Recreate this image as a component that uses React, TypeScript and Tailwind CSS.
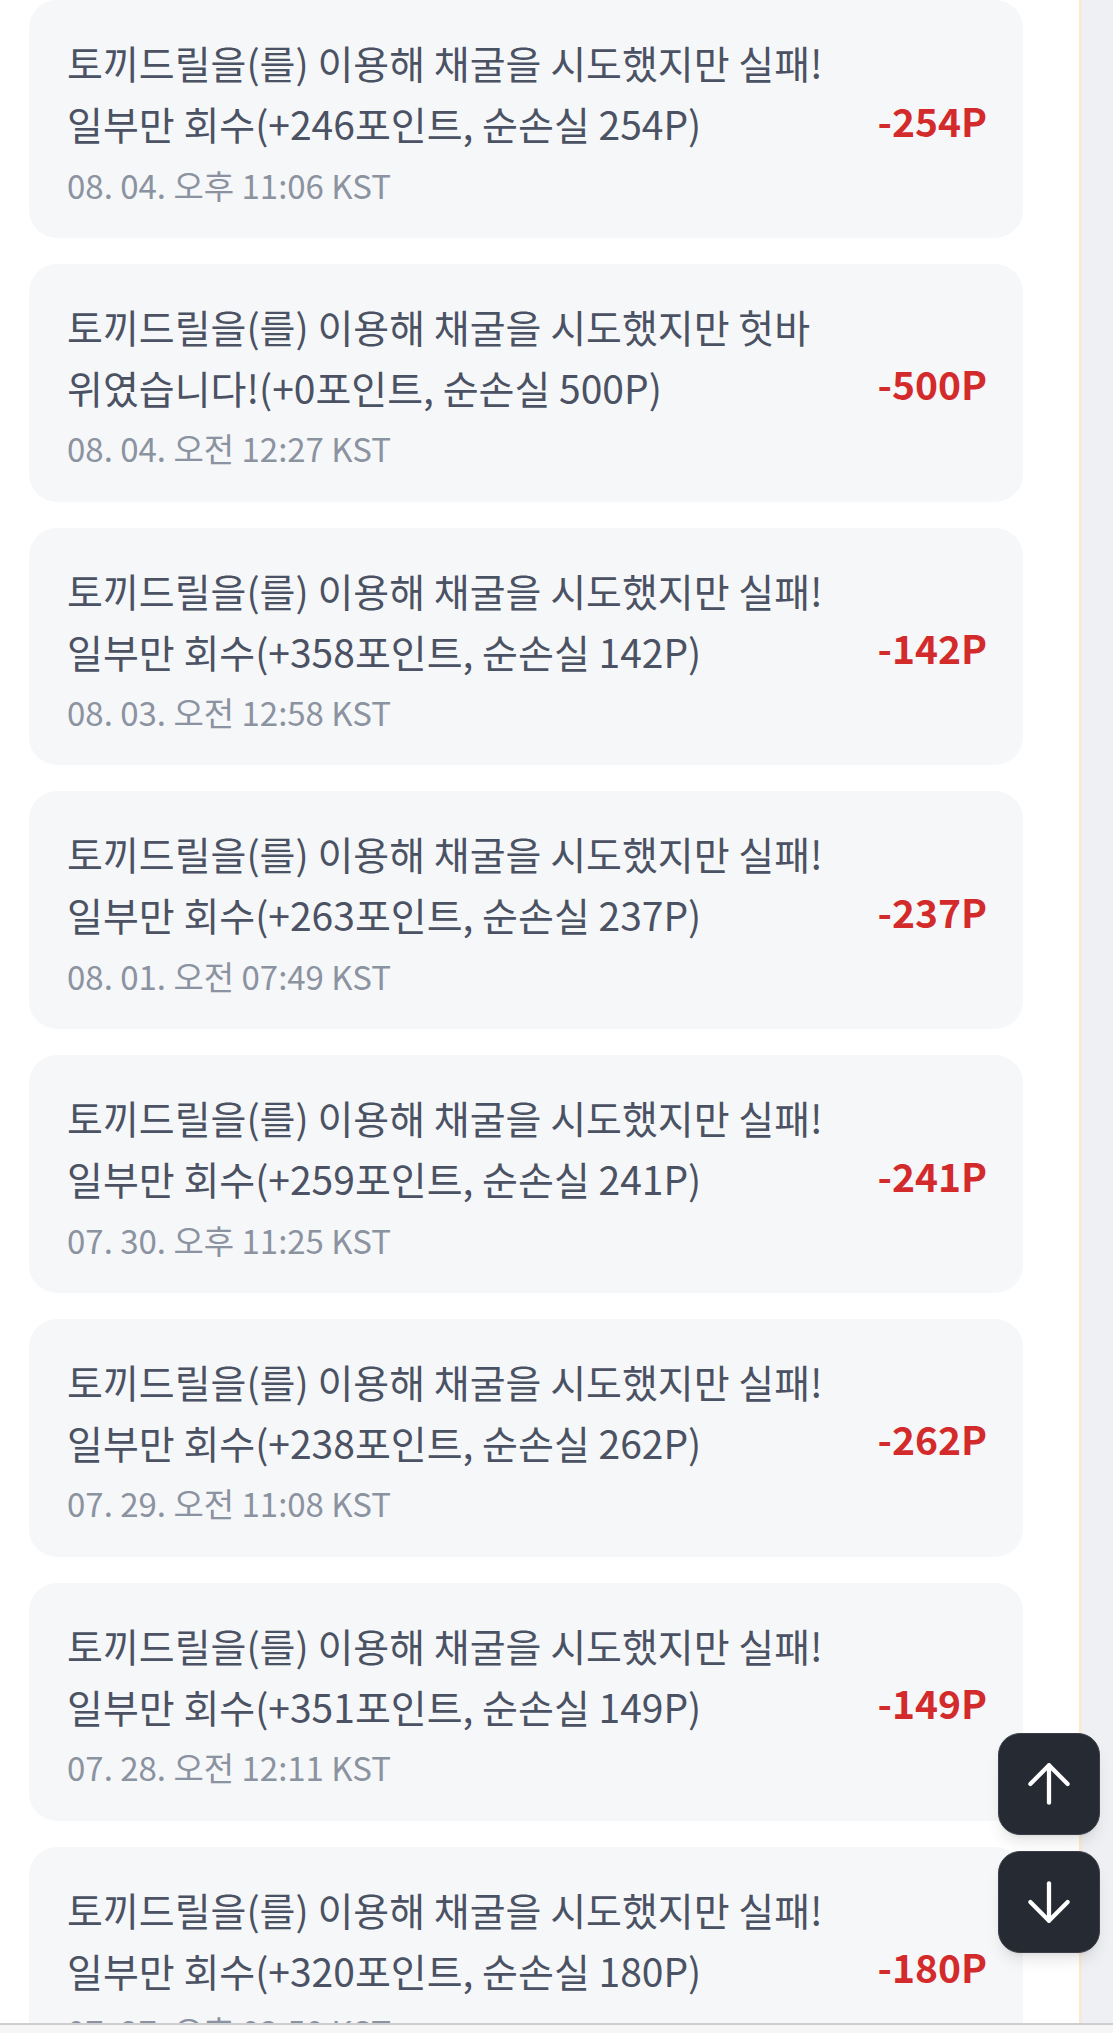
import { ArrowDown, ArrowUp } from 'lucide-react'

interface Entry {
  text: string
  amount: number
  time: string
}

const entries: Entry[] = [
  { text: '토끼드릴을(를) 이용해 채굴을 시도했지만 실패! 일부만 회수(+246포인트, 순손실 254P)', amount: 254, time: '08. 04. 오후 11:06 KST' },
  { text: '토끼드릴을(를) 이용해 채굴을 시도했지만 헛바위였습니다!(+0포인트, 순손실 500P)', amount: 500, time: '08. 04. 오전 12:27 KST' },
  { text: '토끼드릴을(를) 이용해 채굴을 시도했지만 실패! 일부만 회수(+358포인트, 순손실 142P)', amount: 142, time: '08. 03. 오전 12:58 KST' },
  { text: '토끼드릴을(를) 이용해 채굴을 시도했지만 실패! 일부만 회수(+263포인트, 순손실 237P)', amount: 237, time: '08. 01. 오전 07:49 KST' },
  { text: '토끼드릴을(를) 이용해 채굴을 시도했지만 실패! 일부만 회수(+259포인트, 순손실 241P)', amount: 241, time: '07. 30. 오후 11:25 KST' },
  { text: '토끼드릴을(를) 이용해 채굴을 시도했지만 실패! 일부만 회수(+238포인트, 순손실 262P)', amount: 262, time: '07. 29. 오전 11:08 KST' },
  { text: '토끼드릴을(를) 이용해 채굴을 시도했지만 실패! 일부만 회수(+351포인트, 순손실 149P)', amount: 149, time: '07. 28. 오전 12:11 KST' },
  { text: '토끼드릴을(를) 이용해 채굴을 시도했지만 실패! 일부만 회수(+320포인트, 순손실 180P)', amount: 180, time: '07. 27. 오후 03:50 KST' },
]

function HistoryCard({ entry }: { entry: Entry }) {
  return (
    <div className="flex items-center gap-[44px] rounded-[28px] bg-[#f6f7f9] pl-[38px] pr-[36px] pt-[32px] pb-[30.3px]">
      <div className="min-w-0 flex-1">
        <p className="text-[39px] leading-[61px] text-[#4b5263]">{entry.text}</p>
        <p className="mt-[7.5px] text-[33px] leading-[46px] text-[#8b92a0]">{entry.time}</p>
      </div>
      <span className="shrink-0 text-[39px] font-bold text-[#d32b2b]">-{entry.amount}P</span>
    </div>
  )
}

export default function App() {
  return (
    <div
      className="flex h-[2033px] w-[1113px] flex-col overflow-hidden bg-white"
      style={{ fontFamily: '"Noto Sans CJK KR", "Noto Sans", sans-serif' }}
    >
      <div className="flex min-h-0 flex-1">
        <main className="w-[1079px] overflow-hidden pl-[29px] pr-[56px]">
          <div className="flex flex-col gap-[26px]">
            {entries.map((e, i) => (
              <HistoryCard key={i} entry={e} />
            ))}
          </div>
        </main>
        <div className="w-[3px] bg-[#f6ecd6]" />
        <div className="flex-1 bg-[#eff0f3]" />
      </div>
      <div className="h-[10px] border-t-2 border-[#cfcfd2] bg-[#f6f6f7]" />

      {/* scroll buttons */}
      <div className="fixed right-[13px] top-[1733px] flex flex-col gap-[16px]">
        <button className="flex h-[102px] w-[102px] items-center justify-center rounded-[22px] border border-[#3a3e47] bg-[#262a33] text-white shadow-lg">
          <ArrowUp size={64} strokeWidth={1.6} />
        </button>
        <button className="flex h-[102px] w-[102px] items-center justify-center rounded-[22px] border border-[#3a3e47] bg-[#262a33] text-white shadow-lg">
          <ArrowDown size={64} strokeWidth={1.6} />
        </button>
      </div>
    </div>
  )
}
